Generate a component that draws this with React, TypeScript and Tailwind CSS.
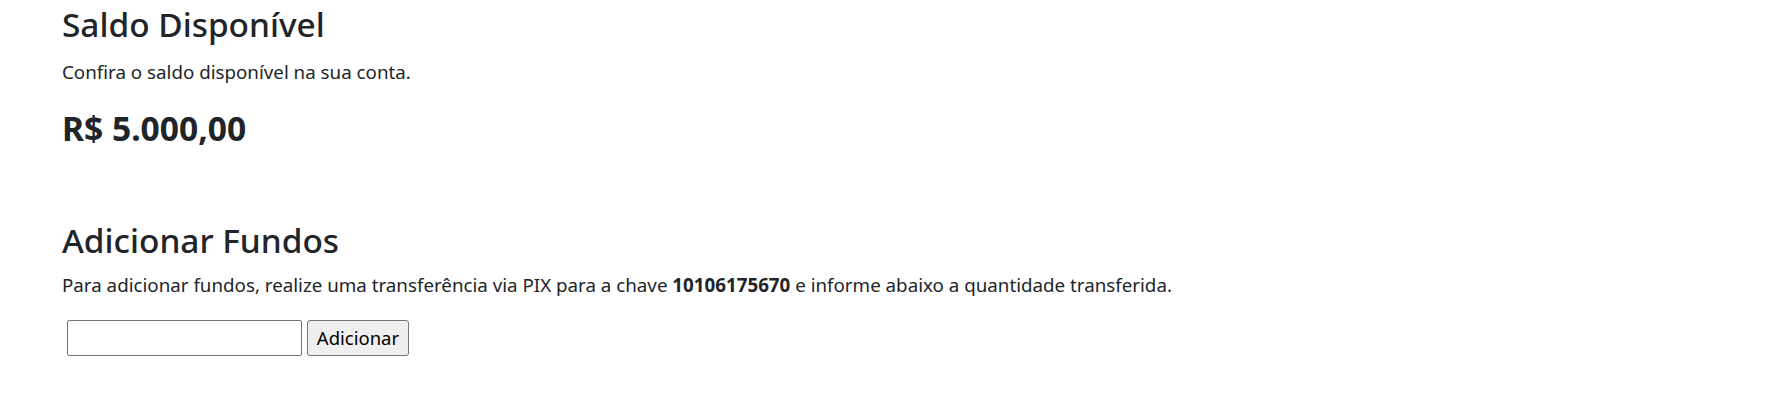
export default function App() {
  return (
    <div className="min-h-[414px] bg-white px-[62px] pt-1 text-[#212529] font-['Noto_Sans',sans-serif]">
      <section>
        <h2 className="text-[33.4px] font-medium leading-[40px]">Saldo Disponível</h2>
        <p className="mt-[14px] text-[18.75px] leading-[28px]">Confira o saldo disponível na sua conta.</p>
        <h3 className="mt-[22px] text-[33.6px] font-bold leading-[40px]">R$ 5.000,00</h3>
      </section>

      <section className="mt-[72px]">
        <h2 className="text-[33.4px] font-medium leading-[40px]">Adicionar Fundos</h2>
        <p className="mt-[11px] text-[18.75px] leading-[28px]">
          Para adicionar fundos, realize uma transferência via PIX para a chave <b className="font-bold">10106175670</b> e
          informe abaixo a quantidade transferida.
        </p>
        <form className="mt-[21px] ml-[5px] flex gap-[5px]" onSubmit={(e) => e.preventDefault()}>
          <input
            type="text"
            className="h-[36px] w-[235px] rounded-[2px] border border-[#767676] bg-white px-1 text-[18px] outline-none"
          />
          <button
            type="submit"
            className="h-[36px] w-[102px] rounded-[3px] border border-[#767676] bg-[#efefef] text-[18.5px] text-black"
          >
            Adicionar
          </button>
        </form>
      </section>
    </div>
  );
}
